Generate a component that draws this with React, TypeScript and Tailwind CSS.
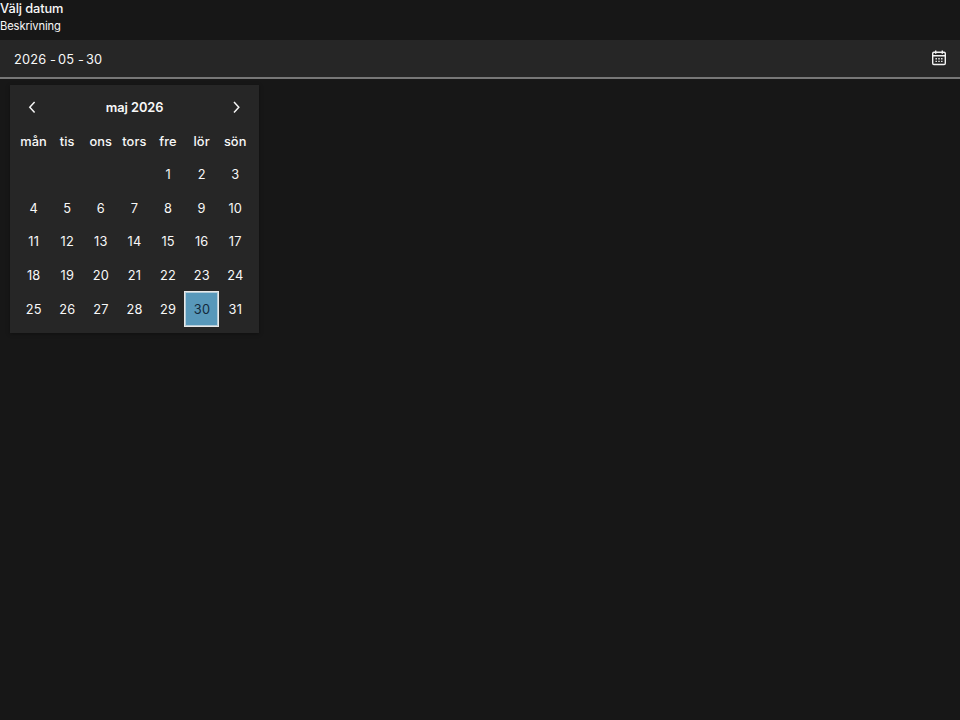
const weekdays = ['mån', 'tis', 'ons', 'tors', 'fre', 'lör', 'sön'];
const blanks = [0, 1, 2, 3];
const days = Array.from({ length: 31 }, (_, i) => i + 1);

function CalendarIcon() {
  return (
    <svg className="h-4 w-4" viewBox="0 0 16 16" fill="none" stroke="#f4f4f4" strokeWidth="1.4">
      <rect x="1.7" y="2.3" width="12.6" height="12.2" rx="1.2" />
      <path d="M2 5.8h12M4.7 0.4v3.4M11.3 0.4v3.4" />
      <path d="M4.5 8.8h1.4M7.3 8.8h1.4M10.1 8.8h1.4M4.5 11.4h1.4M7.3 11.4h1.4M10.1 11.4h1.4" />
    </svg>
  );
}

function Chevron({ d }: { d: string }) {
  return (
    <svg className="h-4 w-4" viewBox="0 0 16 16" fill="none" stroke="#f4f4f4" strokeWidth="1.5">
      <path d={d} />
    </svg>
  );
}

export default function App() {
  return (
    <div className="h-[720px] w-full overflow-hidden bg-[#171717] font-['Inter',sans-serif] text-[12.8px] text-[#f8f8f8]">
      <div className="h-[17px] leading-[17px] font-medium tracking-[-0.1px]">Välj datum</div>
      <div className="h-[23px] pt-px text-[11.2px] leading-[17px] tracking-[-0.12px]">Beskrivning</div>
      <div className="flex h-[39px] items-center justify-between border-b-2 border-[#777777] bg-[#262626] pr-[13px] pl-[14px]">
        <div className="flex pt-[2px] tracking-[0.2px]">
          <span className="w-[36px]">2026</span>
          <span className="w-[8px]">-</span>
          <span className="w-[20px]">05</span>
          <span className="w-[8px]">-</span>
          <span>30</span>
        </div>
        <button aria-label="Välj datum" className="mb-[2px]"><CalendarIcon /></button>
      </div>
      <div className="mt-[5.8px] ml-[9.6px] w-[249.6px] bg-[#262626] px-[7.2px] pt-[5.6px] pb-[7.2px] shadow-[0_1px_4px_rgba(0,0,0,0.35)]">
        <div className="flex h-[33.6px] items-center justify-between px-[7px]">
          <button aria-label="Föregående"><Chevron d="M10.6 3L5.8 8.2l4.8 5.2" /></button>
          <span className="pl-[0.4px] font-semibold tracking-[-0.05px]">maj 2026</span>
          <button aria-label="Nästa"><Chevron d="M5 3L9.8 8.2l-4.8 5.2" /></button>
        </div>
        <div className="grid auto-rows-[33.6px] grid-cols-7">
          {weekdays.map((w) => (
            <div key={w} className="flex items-center justify-center pt-[0.8px] font-medium tracking-[0.1px]">{w}</div>
          ))}
          {blanks.map((b) => <div key={b} />)}
          {days.map((d) => (
            <div
              key={d}
              className={
                d === 30
                  ? 'flex items-center justify-center bg-[#5898ba] pt-[0.8px] pl-[0.8px] tracking-[0.2px] text-[#13293a] shadow-[inset_0_0_0_1px_rgba(240,240,240,0.6)] outline-1 outline-[#e8e8e8]'
                  : 'flex items-center justify-center pt-[0.8px] pl-[0.2px] tracking-[0.2px]'
              }
            >
              {d}
            </div>
          ))}
        </div>
      </div>
    </div>
  );
}
